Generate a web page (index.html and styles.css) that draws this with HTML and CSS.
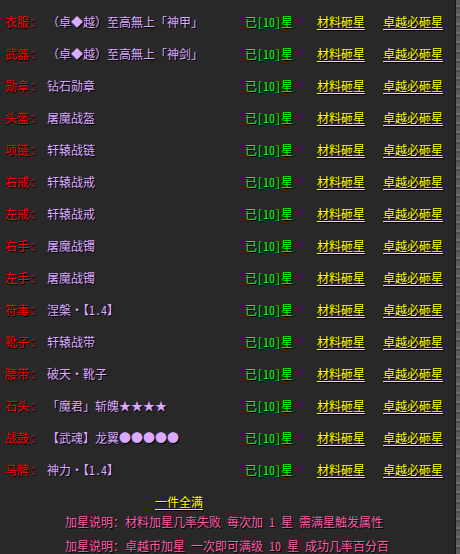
FILE: index.html
```html
<!DOCTYPE html>
<html lang="zh">
<head>
<meta charset="utf-8">
<link rel="stylesheet" href="styles.css">
</head>
<body>
<div class="frame">
  <div class="panel">
    <div class="list">
      <div class="row"><span class="lbl">衣服：</span><span class="val">（卓◆越）至高無上「神甲」</span><span class="st">已[10]星</span><a class="lk">材料砸星</a><a class="lk">卓越必砸星</a></div>
      <div class="row"><span class="lbl">武器：</span><span class="val">（卓◆越）至高無上「神剑」</span><span class="st">已[10]星</span><a class="lk">材料砸星</a><a class="lk">卓越必砸星</a></div>
      <div class="row"><span class="lbl">勋章：</span><span class="val">钻石勋章</span><span class="st">已[10]星</span><a class="lk">材料砸星</a><a class="lk">卓越必砸星</a></div>
      <div class="row"><span class="lbl">头盔：</span><span class="val">屠魔战盔</span><span class="st">已[10]星</span><a class="lk">材料砸星</a><a class="lk">卓越必砸星</a></div>
      <div class="row"><span class="lbl">项链：</span><span class="val">轩辕战链</span><span class="st">已[10]星</span><a class="lk">材料砸星</a><a class="lk">卓越必砸星</a></div>
      <div class="row"><span class="lbl">右戒：</span><span class="val">轩辕战戒</span><span class="st">已[10]星</span><a class="lk">材料砸星</a><a class="lk">卓越必砸星</a></div>
      <div class="row"><span class="lbl">左戒：</span><span class="val">轩辕战戒</span><span class="st">已[10]星</span><a class="lk">材料砸星</a><a class="lk">卓越必砸星</a></div>
      <div class="row"><span class="lbl">右手：</span><span class="val">屠魔战镯</span><span class="st">已[10]星</span><a class="lk">材料砸星</a><a class="lk">卓越必砸星</a></div>
      <div class="row"><span class="lbl">左手：</span><span class="val">屠魔战镯</span><span class="st">已[10]星</span><a class="lk">材料砸星</a><a class="lk">卓越必砸星</a></div>
      <div class="row"><span class="lbl">符毒：</span><span class="val">涅槃·【1.4】</span><span class="st">已[10]星</span><a class="lk">材料砸星</a><a class="lk">卓越必砸星</a></div>
      <div class="row"><span class="lbl">靴子：</span><span class="val">轩辕战带</span><span class="st">已[10]星</span><a class="lk">材料砸星</a><a class="lk">卓越必砸星</a></div>
      <div class="row"><span class="lbl">腰带：</span><span class="val">破天·靴子</span><span class="st">已[10]星</span><a class="lk">材料砸星</a><a class="lk">卓越必砸星</a></div>
      <div class="row"><span class="lbl">石头：</span><span class="val">「魔君」斩魄★★★★</span><span class="st">已[10]星</span><a class="lk">材料砸星</a><a class="lk">卓越必砸星</a></div>
      <div class="row"><span class="lbl">战鼓：</span><span class="val">【武魂】龙翼●●●●●</span><span class="st">已[10]星</span><a class="lk">材料砸星</a><a class="lk">卓越必砸星</a></div>
      <div class="row"><span class="lbl">马牌：</span><span class="val">神力·【1.4】</span><span class="st">已[10]星</span><a class="lk">材料砸星</a><a class="lk">卓越必砸星</a></div>
    </div>
    <div class="foot">
      <a class="lk all">一件全满</a>
      <div class="note">加星说明：材料加星几率失败 每次加 1 星 需满星触发属性</div>
      <div class="note second">加星说明：卓越币加星 一次即可满级 10 星 成功几率百分百</div>
    </div>
  </div>
  <div class="edge"></div>
</div>
</body>
</html>
```

FILE: styles.css
```css
html, body {
  margin: 0;
  padding: 0;
  background: #282828;
}
body {
  width: 460px;
  height: 554px;
  overflow: hidden;
  font-family: "Noto Sans Mono CJK SC", "Noto Sans CJK SC", "Liberation Sans", sans-serif;
  font-size: 12px;
  text-shadow: 1px 1px 0 #000;
}
.frame {
  display: flex;
  height: 554px;
}
.panel {
  width: 455px;
  flex: none;
}
.edge {
  flex: 1;
  border-left: 1px solid #151515;
  background: repeating-linear-gradient(180deg, #5c5c5c 0 5px, #6e6e6e 5px 7px, #4c4c4c 7px 9px);
}
.list {
  padding: 6px 0 0 5px;
}
.row {
  display: grid;
  grid-template-columns: 42px 198px 72px 66px auto;
  height: 32px;
  line-height: 32px;
  white-space: nowrap;
}
.lbl { color: #ff0000; }
.val { color: #dba9ff; }
.st { color: #00ff00; }
.lk {
  color: #ffff00;
  text-decoration: underline;
  text-underline-offset: 2px;
}
.foot {
  display: flex;
  flex-direction: column;
  padding-top: 6px;
}
.all {
  align-self: flex-start;
  margin-left: 155px;
  line-height: 20px;
}
.note {
  margin-left: 65px;
  line-height: 20px;
  color: #ff5aa8;
  white-space: nowrap;
}
.note.second {
  margin-top: 4px;
}
```
